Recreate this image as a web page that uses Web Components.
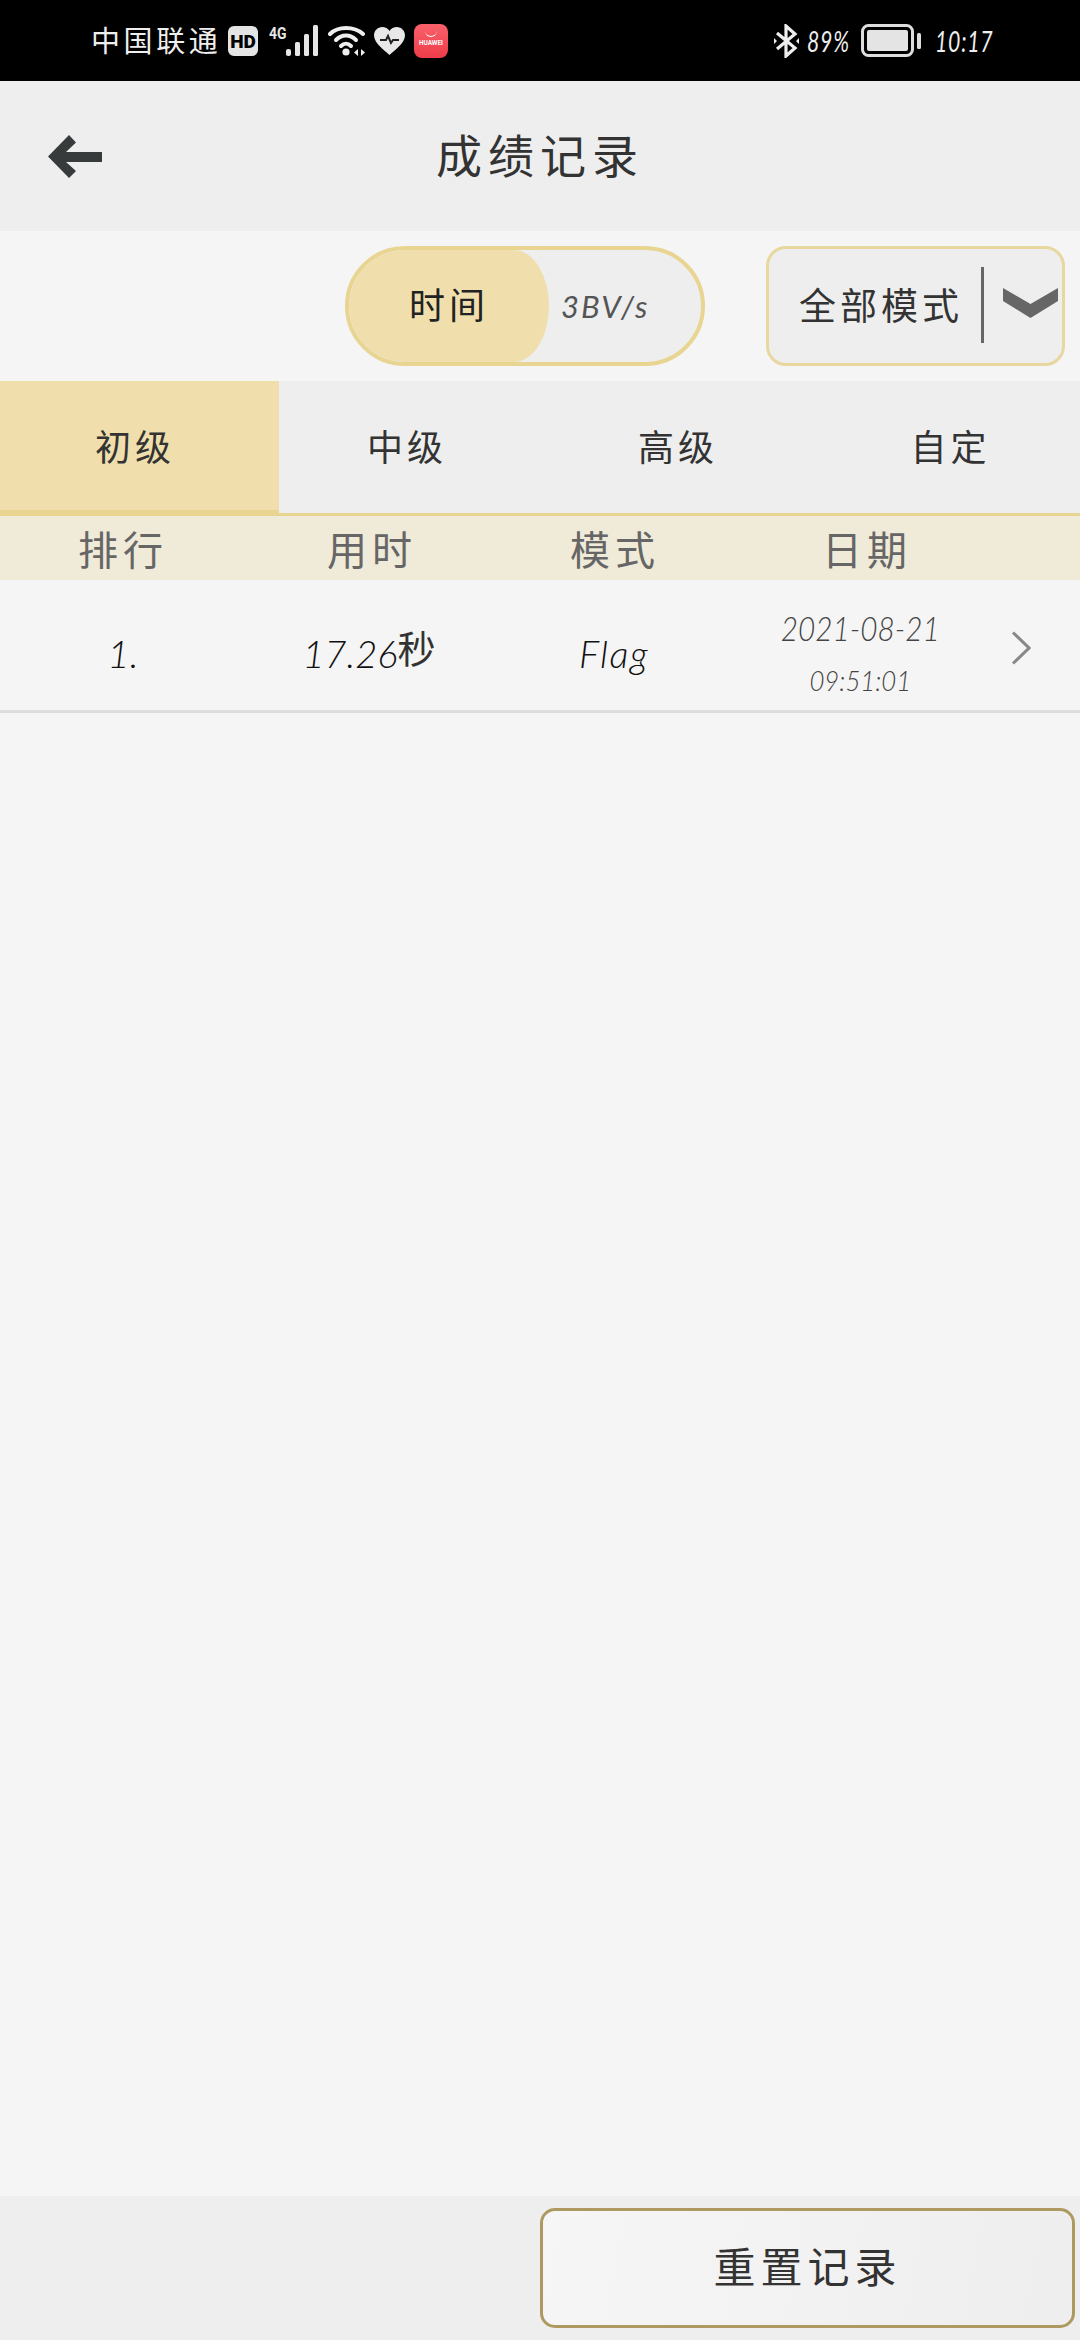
<!DOCTYPE html>
<html lang="zh-CN"><head><meta charset="utf-8"><title>成绩记录</title>
<style>
html,body{margin:0;padding:0;background:#f5f5f5}
body{width:1080px;height:2340px;overflow:hidden;font-family:"Noto Sans CJK SC","Noto Sans",sans-serif;color:#333}
#app{display:flex;flex-direction:column;width:1080px;height:2340px}
.grow{flex:1}
</style></head><body>
<div id="app">
<status-bar></status-bar>
<app-header title="成绩记录"></app-header>
<filter-bar></filter-bar>
<level-tabs></level-tabs>
<score-head></score-head>
<score-row rank="1." time="17.26" mode="Flag" date="2021-08-21" clock="09:51:01"></score-row>
<div class="grow"></div>
<reset-footer></reset-footer>
</div>
<script>
const LAT='"Lato","Open Sans",sans-serif';
const CJK='"Noto Sans CJK SC",sans-serif';
function def(name,html){
  customElements.define(name,class extends HTMLElement{
    connectedCallback(){
      if(this.shadowRoot)return;
      const r=this.attachShadow({mode:'open'});
      r.innerHTML=typeof html==='function'?html(this):html;
    }
  });
}
def('status-bar',`<style>
:host{display:flex;align-items:center;height:81px;background:#000;color:#eee;box-sizing:border-box;padding:0 88px 0 91px;flex:none}
.l,.r{display:flex;align-items:center}
.r{margin-left:auto}
.c{font:400 29px/1 ${CJK};letter-spacing:3.6px;width:137px;white-space:nowrap;margin-top:-2px}
svg{display:block;flex:none}
.g{font:700 17px/1 "Roboto",sans-serif;position:absolute;left:0;top:0;color:#e6e6e6;transform:scaleX(.82);transform-origin:left}
.s{position:relative;width:50px;height:32px;margin-left:11px}
.s svg{position:absolute;left:17px;top:0}
.hw{width:34px;height:34px;margin-left:9px;border-radius:8px;background:linear-gradient(#f9616a,#ee3c4a);position:relative;display:flex;justify-content:center;align-items:flex-end}
.hw i{position:absolute;left:11px;top:7px;width:12px;height:5px;border-bottom:1px solid #fff;border-radius:0 0 8px 8px}
.hw span{font:700 6.4px/1 "Roboto",sans-serif;color:#fff;margin-bottom:11px}
.t{display:inline-block;font:italic 400 28px/1 ${LAT};letter-spacing:1px;color:#eee;white-space:nowrap;transform-origin:left;transform:scaleX(.76)}
</style>
<div class="l">
<span class="c">中国联通</span>
<svg width="30" height="30" viewBox="0 0 30 30"><rect width="30" height="30" rx="6" fill="#e4e4e4"/><text x="15" y="22" text-anchor="middle" font-family="Roboto" font-weight="900" font-size="19" fill="#000">HD</text></svg>
<div class="s"><span class="g">4G</span><svg width="33" height="31" viewBox="0 0 33 31" fill="#e6e6e6"><rect x="0" y="24" width="5" height="7" rx="2"/><rect x="9" y="17" width="5" height="14" rx="1.5"/><rect x="18" y="9" width="5" height="22" rx="1.5"/><rect x="27" y="0" width="5" height="31" rx="1.5"/></svg></div>
<svg style="margin-left:9px" width="38" height="32" viewBox="0 0 38 32" fill="none" stroke="#eee" stroke-width="4" stroke-linecap="round"><path d="M2 9C10 1 26 1 35 9"/><path d="M8 15C14 9 22 9 28 15"/><path d="M13 21C16 18 20 18 23 21"/><circle cx="18" cy="27" r="3.6" fill="#eee" stroke="none"/><path d="M30 24v7l-4-3.5zM33 24v7l4-3.5z" fill="#eee" stroke="none"/></svg>
<svg style="margin-left:8px" width="31" height="28" viewBox="0 0 31 28"><path d="M15.5 28C11 24 0 16 0 8.5 0 3.5 4 0 8 0c3.200 0 6 1.500 7.500 4C17 1.500 19.800 0 23 0c4 0 8 3.500 8 8.500C31 16 20 24 15.500 28z" fill="#e8e8e8"/><path d="M6 13h6l2-4 3 7 2-3h6" fill="none" stroke="#222" stroke-width="2"/></svg>
<div class="hw"><i></i><span>HUAWEI</span></div>
</div>
<div class="r">
<svg width="25" height="34" viewBox="0 0 25 34" fill="none" stroke="#eee" stroke-width="3.200"><path d="M3 9 21 24 12 32V2l9 8L3 25"/><path d="M0 14v6l3-3zM25 14v6l-3-3z" fill="#eee" stroke="none"/></svg>
<span class="t" style="margin-left:8px;width:54px">89%</span>
<svg width="60" height="33" viewBox="0 0 60 33"><rect x="1.500" y="1.500" width="50" height="30" rx="6" fill="none" stroke="#ddd" stroke-width="3"/><rect x="6" y="6" width="41" height="21" rx="2" fill="#e4e4e4"/><rect x="56" y="9" width="4" height="16" rx="1.500" fill="#ddd"/></svg>
<span class="t" style="margin-left:14px;width:57px">10:17</span>
</div>`);
def('app-header',h=>`<style>
:host{display:flex;align-items:center;justify-content:center;height:150px;background:#eee;position:relative;flex:none}
svg{position:absolute;left:48px;top:54px}
h1{margin:0 0 6px;font:400 46px/1 ${CJK};letter-spacing:6px;color:#333}
</style>
<svg width="54" height="43" viewBox="0 0 54 43"><path fill="#383b3c" d="M0 21.500 21 0l7 7.500-10 9.500H54v10H18l10 9-7 7z"/></svg>
<h1>${h.getAttribute('title')}</h1>`);
def('filter-bar',`<style>
:host{display:flex;height:150px;box-sizing:border-box;padding:15px 15px 15px 345px;background:#f5f5f5;flex:none}
.tg{box-sizing:border-box;width:360px;height:120px;border:4px solid #e8d592;border-radius:60px;background:#eee;display:flex;overflow:hidden;align-items:center}
.th{width:200px;height:112px;background:#f0dfac;border-radius:56px 35px 35px 56px/56px;display:flex;align-items:center;justify-content:center;font:400 36px/1 ${CJK};letter-spacing:4px;color:#222;padding-bottom:6px;box-sizing:border-box}
.o{margin-left:12px;font:italic 400 31px/1 ${LAT};letter-spacing:2px;color:#555}
.sel{box-sizing:border-box;margin-left:auto;width:299px;height:120px;border:3.500px solid #e8d79f;border-radius:20px;background:#eee;display:flex;align-items:center}
.lb{width:212px;text-align:right;font:400 37px/1 ${CJK};letter-spacing:4px;color:#333;white-space:nowrap;box-sizing:border-box;padding-right:18px;margin-top:-4px}
.d{width:3px;height:76px;background:#666;margin-top:-3px}
svg{margin-left:19px;margin-top:-7px}
</style>
<div class="tg"><div class="th">时间</div><span class="o">3BV/s</span></div>
<div class="sel"><span class="lb">全部模式</span><span class="d"></span><svg width="55" height="30" viewBox="0 0 55 30"><path fill="#666" d="M0 0 27.500 16 55 0v13L27.500 30 0 13z"/></svg></div>`);
def('level-tabs',`<style>
:host{display:grid;grid-template-columns:279px 256px 286px 259px;height:135px;background:#eee;position:relative;flex:none}
:host::after{content:"";position:absolute;left:0;right:0;bottom:0;height:3px;background:#e8d592}
.t{display:flex;align-items:center;justify-content:center;font:400 36px/1 ${CJK};letter-spacing:4px;color:#333;padding-bottom:7px;box-sizing:border-box}
.a{background:#f0dfac;padding-right:9px;box-shadow:inset 0 -6px 0 #e8d592}
</style>
<div class="t a">初级</div><div class="t">中级</div><div class="t">高级</div><div class="t">自定</div>`);
def('score-head',`<style>
:host{display:grid;grid-template-columns:246px 252px 234px 270px 78px;height:64px;background:#f0ead9;color:#666;font:400 40px/64px ${CJK};letter-spacing:5px;text-align:center;flex:none}
</style>
<div>排行</div><div>用时</div><div>模式</div><div>日期</div>`);
def('score-row',h=>`<style>
:host{display:grid;grid-template-columns:246px 246px 244px 248px 96px;align-items:center;height:133px;box-sizing:border-box;padding-top:15px;border-bottom:3px solid #ddd;text-align:center;color:#111;flex:none;font:italic 300 38px/1 ${LAT}}
.n{white-space:nowrap}
.f{letter-spacing:1.500px}
.n b{font:400 38px/1 ${CJK};color:#333;position:relative;top:-5px}
.dt{display:flex;flex-direction:column;align-items:center;color:#444;font-size:33px;gap:21px}
.dt span{display:inline-block;transform:scaleX(.9);white-space:nowrap}
.dt span+span{font-size:28px;transform:scaleX(.92)}
svg{margin-left:27px;margin-top:-9px;display:block}
</style>
<div class="n">${h.getAttribute('rank')}</div>
<div class="n">${h.getAttribute('time')}<b>秒</b></div>
<div class="n f">${h.getAttribute('mode')}</div>
<div class="dt"><span>${h.getAttribute('date')}</span><span>${h.getAttribute('clock')}</span></div>
<svg width="20" height="34" viewBox="0 0 20 34" fill="none" stroke="#888" stroke-width="3"><path d="M2 1.500 18 17 2 32.500"/></svg>`);
def('reset-footer',`<style>
:host{display:flex;justify-content:flex-end;box-sizing:border-box;height:144px;padding:12px 5px 12px 0;background:#eee;flex:none}
button{box-sizing:border-box;width:535px;height:120px;border:3px solid #ae9a60;border-radius:15px;background:linear-gradient(100deg,#f6f6f6,#eeeeee);font:400 42px/1 ${CJK};letter-spacing:5px;color:#333;padding:0 0 6px}
</style><button>重置记录</button>`);
</script>
</body></html>
